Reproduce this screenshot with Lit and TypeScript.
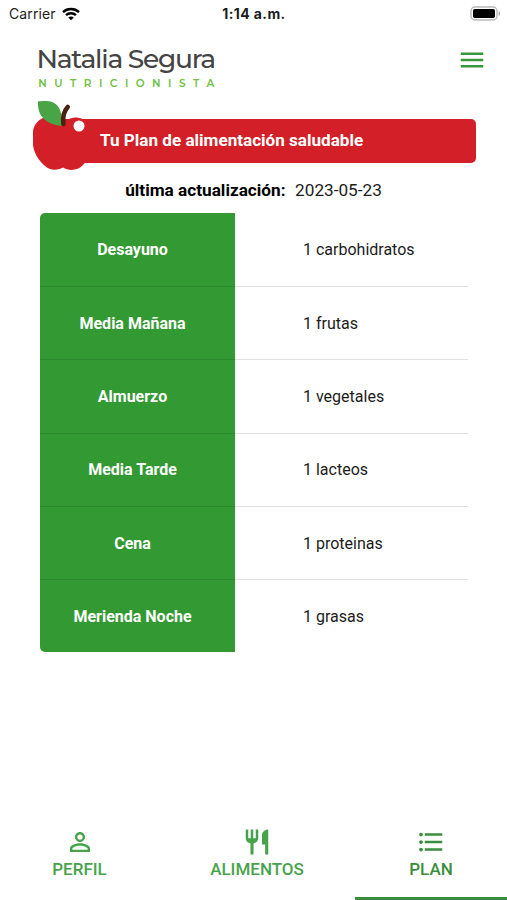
import { LitElement, html, css, svg } from "lit";
import { customElement } from "lit/decorators.js";

const ICONS = {
  menu: "M3 18h18v-2H3v2zm0-5h18v-2H3v2zm0-7v2h18V6H3z",
  person:
    "M12 5.9a2.1 2.1 0 1 1 0 4.2 2.1 2.1 0 0 1 0-4.2m0 9c2.97 0 6.1 1.46 6.1 2.1v1.1H5.9V17c0-.64 3.13-2.1 6.1-2.1M12 4C9.79 4 8 5.79 8 8s1.79 4 4 4 4-1.79 4-4-1.79-4-4-4zm0 9c-2.67 0-8 1.34-8 4v3h16v-3c0-2.66-5.33-4-8-4z",
  food: "M11 9H9V2H7v7H5V2H3v7c0 2.12 1.66 3.84 3.75 3.97V22h2.5v-9.03C11.34 12.84 13 11.12 13 9V2h-2v7zm5-3v8h2.5v8H21V2c-2.76 0-5 2.24-5 4z",
  list: "M4 10.5c-.83 0-1.5.67-1.5 1.5s.67 1.5 1.5 1.5 1.5-.67 1.5-1.5-.67-1.5-1.5-1.5zm0-6c-.83 0-1.5.67-1.5 1.5S3.17 7.5 4 7.5 5.5 6.83 5.5 6 4.83 4.5 4 4.5zm0 12c-.83 0-1.5.68-1.5 1.5s.68 1.5 1.5 1.5 1.5-.68 1.5-1.5-.67-1.5-1.5-1.5zM7 19h14v-2H7v2zm0-6h14v-2H7v2zm0-8v2h14V5H7z",
};

const icon = (name: keyof typeof ICONS) =>
  html`<svg class="icon" viewBox="0 0 24 24">${svg`<path d=${ICONS[name]} />`}</svg>`;

const MEALS = [
  ["Desayuno", "1 carbohidratos"],
  ["Media Mañana", "1 frutas"],
  ["Almuerzo", "1 vegetales"],
  ["Media Tarde", "1 lacteos"],
  ["Cena", "1 proteinas"],
  ["Merienda Noche", "1 grasas"],
];

@customElement("app-root")
export class AppRoot extends LitElement {
  static styles = css`
    :host {
      display: flex;
      flex-direction: column;
      box-sizing: border-box;
      height: 900px;
      background: #fff;
      color: #1c1c1c;
      font-family: Roboto, sans-serif;
      font-size: 16px;
      overflow: hidden;
    }
    svg {
      display: block;
      flex: none;
    }
    .icon {
      width: 30px;
      height: 30px;
      fill: currentColor;
    }
    .status {
      display: grid;
      grid-template-columns: 1fr auto 1fr;
      align-items: center;
      height: 27px;
      padding: 0 6px 0 9px;
      font-family: Inter, sans-serif;
      font-size: 14px;
    }
    .carrier {
      display: flex;
      align-items: center;
      gap: 6px;
      letter-spacing: 0.1px;
    }
    .clock {
      font-weight: 700;
      letter-spacing: 0.4px;
      margin-right: 2px;
    }
    .battery {
      justify-self: end;
    }
    .header {
      display: flex;
      justify-content: space-between;
      align-items: flex-start;
      height: 73px;
      padding: 18px 20px 0 38px;
      box-sizing: border-box;
    }
    .brand {
      font-family: "Montserrat", Inter, sans-serif;
      overflow: visible;
    }
    .menu {
      color: #3a963c;
    }
    .banner {
      position: relative;
      display: flex;
      align-items: center;
      height: 44px;
      margin: 19px 31px 0 60px;
      padding: 0 0 2px 40px;
      box-sizing: border-box;
      border-radius: 5px;
      background: #d31f27;
      color: #fff;
      font-size: 17.1px;
      font-weight: 700;
    }
    .apple {
      position: absolute;
      left: -28px;
      top: -20px;
    }
    .updated {
      display: flex;
      justify-content: center;
      gap: 9.5px;
      height: 50px;
      line-height: 55px;
      font-size: 17.2px;
    }
    .updated b {
      color: #000;
    }
    .plan {
      display: grid;
      grid-template-rows: 73px repeat(4, 73.3px) 1fr;
      height: 439px;
      margin: 0 39px 0 40px;
      border-radius: 5px 0 0 5px;
      overflow: hidden;
      background: linear-gradient(90deg, #339933 195px, transparent 195px);
    }
    .row {
      display: grid;
      grid-template-columns: 185px 1fr;
      align-items: center;
    }
    .row + .row {
      border-top: 1px solid rgba(0, 0, 0, 0.12);
    }
    .meal {
      text-align: center;
      color: #fff;
      font-weight: 700;
    }
    .portion {
      padding-left: 78px;
    }
    .tabs {
      display: grid;
      grid-template-columns: 159px 196px 152px;
      height: 85px;
      margin-top: auto;
      color: #47a34b;
    }
    .tab {
      display: flex;
      flex-direction: column;
      align-items: center;
      box-sizing: border-box;
      padding-top: 11.5px;
      gap: 2.5px;
      font-size: 17px;
      line-height: 20px;
      font-weight: 500;
      border-bottom: 3px solid transparent;
    }
    .active {
      color: #388e3c;
      border-color: #388e3c;
    }
  `;

  render() {
    return html`
      <div class="status">
        <div class="carrier">
          <span>Carrier</span>
          <svg width="18" height="14" viewBox="0 0 18 14" fill="none" stroke="#000" stroke-width="2.4">
            <path d="M1 5.1C5.3.9 12.7.9 17 5.1" />
            <path d="M4 8.2c2.7-2.7 7.3-2.7 10 0" />
            <path d="M9 13.3 6.2 10.6c1.6-1.4 4-1.4 5.6 0z" fill="#000" stroke="none" />
          </svg>
        </div>
        <span class="clock">1:14 a.m.</span>
        <svg class="battery" width="31" height="15" viewBox="0 0 31 15">
          <rect x="1" y="1" width="26" height="13" rx="4" fill="#fff" stroke="#b9b9b9" stroke-width="1.4" />
          <rect x="3" y="3" width="22" height="9" rx="1.8" fill="#000" />
          <path d="M28.6 5.2c2 .5 2 4.1 0 4.6z" fill="#a8a8a8" />
        </svg>
      </div>

      <div class="header">
        <svg class="brand" width="180" height="48" viewBox="0 0 180 48">
          <text x="-1.5" y="23" font-size="26.5" font-weight="500" fill="#444" textLength="179.5" lengthAdjust="spacing">Natalia Segura</text>
          <text x="0.3" y="42.3" font-size="10.5" font-weight="600" fill="#70c042" textLength="176" lengthAdjust="spacing">NUTRICIONISTA</text>
        </svg>
        <div class="menu">${icon("menu")}</div>
      </div>

      <div class="banner">
        <svg class="apple" width="60" height="72" viewBox="0 0 60 72">
          <path d="M1 32C2 26 6 21 11 19L29 26C34 20 40 18.5 45 18.5C52 19 58 24 59 30C60 45 58 60 51 66C46 71.5 37 72.5 31 68.5C25 72 17 71 13 67C6 61 2 54 1 46Z" fill="#d31f27" />
          <path d="M6 2.5C10 1.5 18 2 20 3C26 5 29 11 29.3 17L30 27C19 26 5 21 6 2.5Z" fill="#48a445" />
          <path d="M31.4 25C30.5 18 32 12 35.7 8" fill="none" stroke="#4b2112" stroke-width="4.6" stroke-linecap="round" />
          <circle cx="47" cy="27" r="5.5" fill="#fff" />
        </svg>
        <span>Tu Plan de alimentación saludable</span>
      </div>

      <div class="updated"><b>última actualización:</b><span>2023-05-23</span></div>

      <div class="plan">
        ${MEALS.map(
          ([meal, portion]) => html`<div class="row">
            <span class="meal">${meal}</span><span class="portion">${portion}</span>
          </div>`
        )}
      </div>

      <div class="tabs">
        <div class="tab">${icon("person")}<span>PERFIL</span></div>
        <div class="tab">${icon("food")}<span>ALIMENTOS</span></div>
        <div class="tab active">${icon("list")}<span>PLAN</span></div>
      </div>
    `;
  }
}
